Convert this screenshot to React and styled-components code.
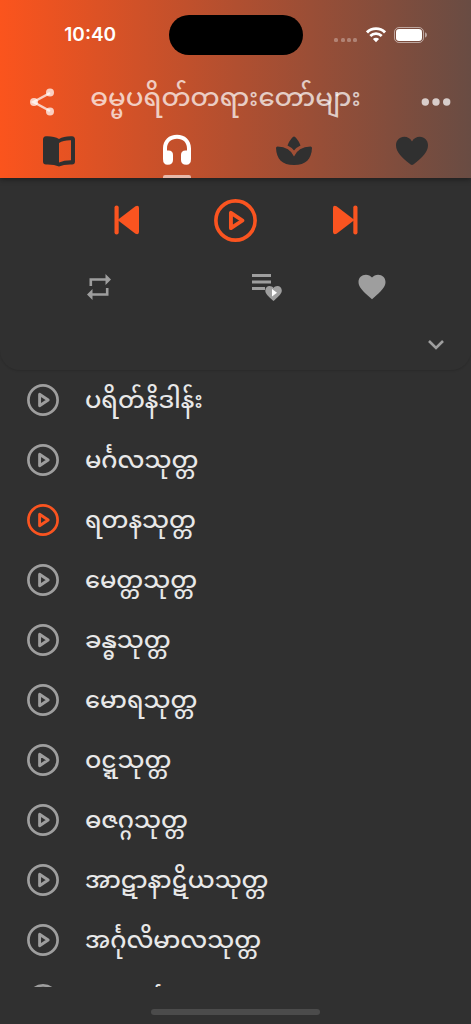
import React, { useState } from 'react';
import styled, { createGlobalStyle } from 'styled-components';

const GlobalStyle = createGlobalStyle`
  * { box-sizing: border-box; }
  body { margin: 0; background: #303030; }
  button { font: inherit; color: inherit; background: none; border: 0; padding: 0; cursor: pointer; }
  svg { display: block; }
`;

const Screen = styled.div`
  height: 100vh;
  display: flex;
  flex-direction: column;
  background: #303030;
  color: #e8e8e8;
  font-family: "Noto Sans Myanmar", "Noto Sans", Inter, sans-serif;
`;

const Header = styled.header`
  flex: none;
  z-index: 1;
  background: linear-gradient(90deg, #fb541d 0%, #b14f30 50%, #694c43 100%);
  box-shadow: 0 2px 5px rgba(0, 0, 0, 0.35);
`;

const StatusBar = styled.div`
  height: 70px;
  display: grid;
  grid-template-columns: 1fr 134px 1fr;
  align-items: center;
  color: #fff;
`;

const Time = styled.time`
  font: 600 19px/24px Inter, sans-serif;
  text-align: center;
  padding-left: 12px;
`;

const Island = styled.div`
  height: 40px;
  border-radius: 20px;
  background: #000;
`;

const StatusIcons = styled.div`
  display: flex;
  align-items: center;
  justify-content: flex-end;
  gap: 8px;
  padding-right: 43px;
`;

const TitleBar = styled.div`
  height: 64px;
  display: grid;
  grid-template-columns: 84px 1fr 70px;
  align-items: center;
  color: rgba(255, 255, 255, 0.72);
`;

const Title = styled.h1`
  margin: 0;
  padding-right: 34px;
  padding-bottom: 4px;
  font-size: 26px;
  line-height: 50px;
  font-weight: 500;
  text-align: center;
  white-space: nowrap;
`;

const IconButton = styled.button`
  display: flex;
  justify-content: center;
  align-items: center;
  color: ${(p) => p.$color || 'inherit'};
`;

const Tabs = styled.nav`
  height: 44px;
  display: grid;
  grid-template-columns: repeat(4, 1fr);
`;

const Tab = styled.button`
  display: flex;
  flex-direction: column;
  align-items: center;
  justify-content: space-between;
  color: ${(p) => (p.$active ? '#fff' : '#303030')};

  &::after {
    content: "";
    width: 28px;
    height: 3px;
    border-radius: 2px 2px 0 0;
    background: ${(p) => (p.$active ? 'rgba(255, 255, 255, 0.6)' : 'transparent')};
  }
`;

const Player = styled.section`
  flex: none;
  padding: 18px 18px 9px;
  border-radius: 0 0 20px 20px;
  box-shadow: 0 1px 2px rgba(0, 0, 0, 0.14);
`;

const Transport = styled.div`
  display: grid;
  grid-template-columns: repeat(3, 48px);
  column-gap: 61px;
  justify-content: center;
  height: 48px;
  color: #fa5420;
`;

const Options = styled.div`
  display: flex;
  justify-content: center;
  height: 48px;
  margin-top: 19px;
  color: #9e9e9e;
`;

const OptionButton = styled(IconButton)`
  width: 48px;
  margin-left: ${(p) => p.$gap || 0}px;
`;

const Collapse = styled.div`
  height: 50px;
  display: flex;
  justify-content: flex-end;
  align-items: flex-end;
  padding-bottom: 10px;
  padding-right: 8px;
  color: #9e9e9e;
`;

const TrackList = styled.ul`
  flex: 1;
  min-height: 0;
  margin: 0;
  padding: 0;
  list-style: none;
  overflow-y: auto;
  scrollbar-width: none;
`;

const Track = styled.button`
  width: 100%;
  height: 60px;
  display: flex;
  align-items: center;
  gap: 26px;
  padding: 0 27px !important;
  text-align: left;
  color: ${(p) => (p.$active ? '#fa5420' : '#9e9e9e')};
`;

const TrackName = styled.span`
  padding-top: 5px;
  color: #e8e8e8;
  font-size: 24px;
  font-weight: 500;
  line-height: 40px;
  white-space: nowrap;
`;

const SafeArea = styled.footer`
  flex: none;
  height: 37px;
  display: flex;
  justify-content: center;
  align-items: flex-end;
  padding-bottom: 9px;
`;

const HomeBar = styled.div`
  width: 36%;
  height: 6px;
  border-radius: 3px;
  background: #4b4b4b;
`;

const SignalDots = () => (
  <svg width="24" height="20" fill="#fff" opacity="0.3">
    {[2, 9, 15, 21].map((x) => <rect key={x} x={x - 2} y="13" width="4" height="4" rx="1.5" />)}
  </svg>
);

const Wifi = () => (
  <svg width="20" height="16" viewBox="0 0 20 16" fill="none" stroke="#fff">
    <path d="M1 5.4a12.7 12.7 0 0 1 18 0" strokeWidth="2.9" />
    <path d="M4.3 9a8 8 0 0 1 11.4 0" strokeWidth="2.7" />
    <path d="M10 15.2 6.9 12a4.4 4.4 0 0 1 6.2 0z" fill="#fff" stroke="none" />
  </svg>
);

const Battery = () => (
  <svg width="34" height="16" viewBox="0 0 34 16">
    <rect x="0.5" y="0.5" width="29" height="15" rx="4.5" fill="none" stroke="#fff" opacity="0.5" />
    <rect x="2" y="2" width="26" height="12" rx="3.2" fill="#fff" />
    <path d="M31 5.3q2 .8 2 2.7t-2 2.7z" fill="#fff" opacity="0.5" />
  </svg>
);

const ShareIcon = () => (
  <svg width="26" height="28" viewBox="0 0 26 28" fill="currentColor">
    <path d="M21 5 4.500 14 21 23" fill="none" stroke="currentColor" strokeWidth="2.500" />
    <circle cx="21" cy="4.500" r="4" />
    <circle cx="5" cy="14" r="4" />
    <circle cx="21" cy="23.500" r="4" />
  </svg>
);

const MoreIcon = () => (
  <svg width="30" height="8" viewBox="0 0 30 8" fill="currentColor">
    <circle cx="4.300" cy="4" r="3.700" />
    <circle cx="15" cy="4" r="3.700" />
    <circle cx="25.700" cy="4" r="3.700" />
  </svg>
);

const BookIcon = () => (
  <svg width="34" height="34" viewBox="0 0 34 34" fill="currentColor">
    <path fillRule="evenodd" d="M1 5.500Q1 2.500 4 2.300 12 2 17 5q5-3 13-2.700 3 .2 3 3.200v22q0 3-3 3-8-.3-13 2-5-2.300-13-2-3 0-3-3zM17 9v19.500q5-2.200 12-2.200V6.200Q21.500 6 17 9z" />
  </svg>
);

const HeadphonesIcon = () => (
  <svg width="30" height="34" viewBox="0 0 30 34" fill="currentColor">
    <path d="M1 14.500C1 6 7 .8 15 .8S29 6 29 14.500V25q0 5.800-4.700 5.800Q19 30.800 19 26v-5q0-4.500 4.500-4.500H25v-2C25 8.500 21 4.800 15 4.800S5 8.500 5 14.500v2h1.500Q11 16.500 11 21v5q0 4.800-5.300 4.800Q1 30.800 1 25z" />
  </svg>
);

const LotusIcon = () => (
  <svg width="38" height="34" viewBox="0 0 38 34" fill="currentColor">
    <path d="M19 2.500q1 0 2.500 2 3 3.500 4 7Q22 13 19 16.500q-3-3.500-6.500-5 1-3.500 4-7Q18 2.500 19 2.500z" />
    <path d="M1 14q0-1.500 1.500-1.500Q15 13 19 22.500 23 13 35.500 12.500 37 12.500 37 14C36.500 25 31 31 19 31S1.500 25 1 14z" />
  </svg>
);

const TabHeartIcon = () => (
  <svg width="34" height="34" viewBox="0 0 34 34" fill="currentColor">
    <path d="M17 31c-1 0-1.700-.6-2.600-1.400C6.500 23 1 17.800 1 11.200 1 6.300 4.500 2.700 9.200 2.700c3.200 0 6 1.500 7.800 4.700 1.800-3.200 4.600-4.700 7.800-4.700C29.500 2.700 33 6.300 33 11.200c0 6.600-5.500 11.800-13.400 18.400-.9.800-1.600 1.400-2.600 1.400z" />
  </svg>
);

const HeartIcon = () => (
  <svg width="28" height="26" viewBox="0 0 28 26" fill="currentColor">
    <path d="M14 25.300 12 23.500C5 17.200.5 13 .5 7.900.5 3.700 3.700.7 7.900.7c2.400 0 4.700 1.100 6.100 2.900C15.400 1.800 17.700.7 20.100.7c4.200 0 7.400 3 7.400 7.200 0 5.100-4.500 9.300-11.500 15.600z" />
  </svg>
);

const PlayCircle = ({ size }) => (
  <svg width={size} height={size} viewBox="0 0 32 32" fill="none" stroke="currentColor">
    <circle cx="16" cy="16" r="14.600" strokeWidth="2.700" />
    <path d="M12.600 10.300v11.400L21.200 16z" strokeWidth="2.900" strokeLinejoin="round" />
  </svg>
);

const PreviousIcon = () => (
  <svg width="26" height="30" viewBox="0 0 26 30" fill="currentColor">
    <rect x="0.500" y="0.500" width="4.200" height="29" rx="2.100" />
    <path d="M3.500 15 21.500 1.200Q25 0 25 3v24q0 3-3.500 1.800z" />
  </svg>
);

const NextIcon = () => (
  <svg width="26" height="30" viewBox="0 0 26 30" fill="currentColor">
    <rect x="21.300" y="0.500" width="4.200" height="29" rx="2.100" />
    <path d="M22.500 15 4.500 1.200Q1 0 1 3v24q0 3 3.500 1.800z" />
  </svg>
);

const RepeatIcon = () => (
  <svg width="24" height="28" viewBox="0 0 24 28" fill="currentColor">
    <path d="M2.500 13V5.200h16V1L24 6.500 18.500 12V7.800H5.100V13zM21.500 15v7.800h-16V27L0 21.500 5.500 16v4.200h13.400V15z" />
  </svg>
);

const QueueHeartIcon = () => (
  <svg width="32" height="28" viewBox="0 0 32 28" fill="currentColor">
    <path d="M1 1h19v3H1zM1 7.500h19v3H1zM1 14h13v3H1z" />
    <path d="m22.500 28-1.200-1.100C17 23 14.300 20.600 14.300 17.500c0-2.500 1.900-4.400 4.300-4.400 1.500 0 3 .7 3.900 1.800.9-1.100 2.400-1.800 3.900-1.800 2.500 0 4.400 1.900 4.400 4.400 0 3.100-2.800 5.500-7.100 9.400z" />
    <path d="M21 16v7.500l5-3.700z" fill="#fff" />
  </svg>
);

const ChevronIcon = () => (
  <svg width="18" height="12" viewBox="0 0 18 12" fill="none" stroke="currentColor" strokeWidth="2.600">
    <path d="m2 2 7 7 7-7" />
  </svg>
);

const tabs = [
  { name: 'Read', Icon: BookIcon },
  { name: 'Listen', Icon: HeadphonesIcon },
  { name: 'Meditate', Icon: LotusIcon },
  { name: 'Favourites', Icon: TabHeartIcon },
];

const tracks = [
  'ပရိတ်နိဒါန်း',
  'မင်္ဂလသုတ္တ',
  'ရတနသုတ္တ',
  'မေတ္တသုတ္တ',
  'ခန္ဓသုတ္တ',
  'မောရသုတ္တ',
  'ဝဋ္ဋသုတ္တ',
  'ဓဇဂ္ဂသုတ္တ',
  'အာဋာနာဋိယသုတ္တ',
  'အင်္ဂုလိမာလသုတ္တ',
  'ဗောဇ္ဈင်္ဂသုတ္တ',
];

export default function App() {
  const [tab, setTab] = useState(1);
  const [current, setCurrent] = useState(2);

  return (
    <Screen lang="my">
      <GlobalStyle />
      <Header>
        <StatusBar>
          <Time>10:40</Time>
          <Island />
          <StatusIcons>
            <SignalDots />
            <Wifi />
            <Battery />
          </StatusIcons>
        </StatusBar>
        <TitleBar>
          <IconButton aria-label="Share"><ShareIcon /></IconButton>
          <Title>ဓမ္မပရိတ်တရားတော်များ</Title>
          <IconButton aria-label="More"><MoreIcon /></IconButton>
        </TitleBar>
        <Tabs>
          {tabs.map(({ name, Icon }, i) => (
            <Tab key={name} aria-label={name} $active={i === tab} onClick={() => setTab(i)}>
              <Icon />
            </Tab>
          ))}
        </Tabs>
      </Header>

      <Player>
        <Transport>
          <IconButton aria-label="Previous"><PreviousIcon /></IconButton>
          <IconButton aria-label="Play"><PlayCircle size={43} /></IconButton>
          <IconButton aria-label="Next"><NextIcon /></IconButton>
        </Transport>
        <Options>
          <OptionButton aria-label="Repeat"><RepeatIcon /></OptionButton>
          <OptionButton aria-label="Play favourites" $gap={120}><QueueHeartIcon /></OptionButton>
          <OptionButton aria-label="Add to favourites" $gap={57}><HeartIcon /></OptionButton>
        </Options>
        <Collapse>
          <IconButton aria-label="Collapse player"><ChevronIcon /></IconButton>
        </Collapse>
      </Player>

      <TrackList>
        {tracks.map((name, i) => (
          <li key={name}>
            <Track $active={i === current} onClick={() => setCurrent(i)}>
              <PlayCircle size={32} />
              <TrackName>{name}</TrackName>
            </Track>
          </li>
        ))}
      </TrackList>

      <SafeArea><HomeBar /></SafeArea>
    </Screen>
  );
}
